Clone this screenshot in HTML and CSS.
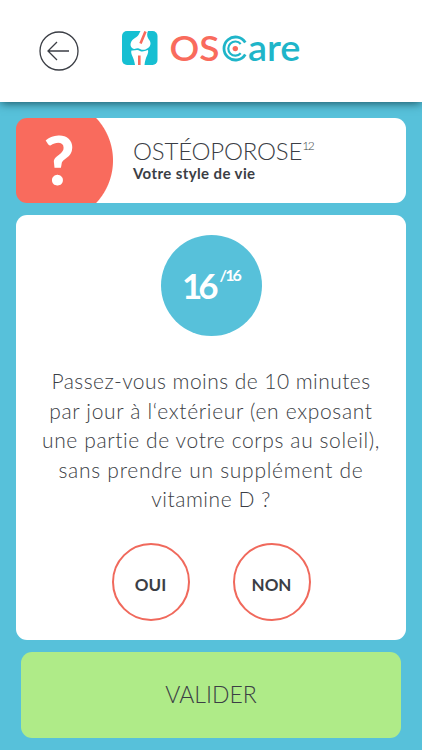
FILE: index.html
```html
<!DOCTYPE html>
<html lang="fr">
<head>
    <meta charset="UTF-8">
    <meta name="viewport" content="width=device-width, initial-scale=1.0">
    <title>OSCare - Ostéoporose</title>
    <link rel="stylesheet" href="styles.css">
</head>
<body>
    <header class="header">
        <button class="back-btn" aria-label="Retour">
            <svg width="40" height="40" viewBox="0 0 40 40">
                <circle cx="20" cy="20" r="19"/>
                <path d="M30 20H9M18 11L9 20L18 29"/>
            </svg>
        </button>
        <svg class="logo" width="182" height="42" viewBox="0 0 182 42">
            <rect x="2" y="2" width="35.500" height="34" rx="5" fill="#16bfd2"/>
            <path d="M20.500 2C19 5 18.500 7 15 9C11 11 9 16 12 19C15 21.500 17 18 20 20C23 21.500 25 21 28 19C31 17 31.500 13 28.500 10C26.500 7 27 4 28 2Z" fill="#fff"/>
            <path d="M11.500 21.500C15 22 17 20 20 22C23 23.500 25 21.500 28 21C29 25 25.500 27 24.500 36H15C14 28 10 25 11.500 21.500Z" fill="#fff"/>
            <path d="M25.500 2.500L20.500 14.500M19.300 26.500V36" stroke="#f96b5d" stroke-width="2.600"/>
            <text class="logo-os" x="49.500" y="31.500" textLength="50" lengthAdjust="spacingAndGlyphs">OS</text>
            <g fill="none" stroke="#1fb5c9">
                <path d="M125.300 13.500A11.500 11.500 0 1 0 125.300 25.500" stroke-width="2.800"/>
                <path d="M120.700 14.900A7.100 7.100 0 1 0 120.700 24.300" stroke-width="2.200"/>
            </g>
            <circle cx="115.300" cy="19.600" r="2.700" fill="#f96b5d"/>
            <text class="logo-are" x="128" y="32" textLength="52.500" lengthAdjust="spacingAndGlyphs">are</text>
        </svg>
    </header>

    <main class="content">
        <section class="title-card">
            <div class="title-icon">?</div>
            <div class="title-text">
                <h1>OSTÉOPOROSE<sup>12</sup></h1>
                <h2>Votre style de vie</h2>
            </div>
        </section>

        <section class="question-card">
            <div class="counter"><span>16</span><sup>/16</sup></div>
            <p class="question">
                <span class="line-1">Passez-vous moins de 10 minutes</span>
                <span class="line-2">par jour à l‘extérieur (en exposant</span>
                <span class="line-3">une partie de votre corps au soleil),</span>
                <span class="line-4">sans prendre un supplément de</span>
                <span class="line-5">vitamine D ?</span>
            </p>
            <div class="answers">
                <button class="answer-btn">OUI</button>
                <button class="answer-btn">NON</button>
            </div>
        </section>

        <button class="submit-btn">VALIDER</button>
    </main>
</body>
</html>
```
FILE: styles.css
```css
* {
    margin: 0;
    padding: 0;
    box-sizing: border-box;
    font-family: Lato, 'Open Sans', sans-serif;
}

body {
    background-color: #57c1da;
    color: #3b3e45;
    height: 750px;
    overflow: hidden;
}

button {
    background: none;
    border: none;
    color: inherit;
    cursor: pointer;
}

.header {
    background-color: #fff;
    height: 102px;
    padding: 29px 0 0 39px;
    display: flex;
    align-items: flex-start;
    box-shadow: 0 2px 9px -1px rgba(0, 40, 50, 0.75);
}

.back-btn {
    width: 40px;
    height: 40px;
    margin-top: 2px;
}

.back-btn svg {
    display: block;
    fill: none;
    stroke: #3b3e45;
    stroke-width: 1.3;
}

.logo {
    margin-left: 41px;
    overflow: visible;
}

.logo-os {
    font-size: 34px;
    font-weight: 600;
    fill: #f96b5d;
}

.logo-are {
    font-size: 36px;
    font-weight: 600;
    fill: #1fb5c9;
}

.content {
    padding: 16px 16px 0;
}

.title-card {
    height: 85px;
    border-radius: 11px;
    background: radial-gradient(circle at 35px 42.5px, #f96b5d 61.5px, #fff 62.5px);
    display: flex;
}

.title-icon {
    width: 86px;
    color: #fff;
    font-size: 67px;
    line-height: 83px;
    font-weight: 900;
    text-align: center;
}

.title-text {
    padding: 18px 0 0 31px;
}

.title-text h1 {
    font-size: 24px;
    line-height: 30px;
    font-weight: 300;
    letter-spacing: -0.2px;
    white-space: nowrap;
}

.title-text sup {
    font-size: 12px;
    line-height: 0;
    letter-spacing: -1.5px;
    vertical-align: 10px;
}

.title-text h2 {
    font-size: 15px;
    line-height: 15px;
    font-weight: 700;
    letter-spacing: 0.4px;
}

.question-card {
    height: 425px;
    margin-top: 12px;
    padding-top: 20px;
    border-radius: 11px;
    background-color: #fff;
    display: flex;
    flex-direction: column;
    align-items: center;
}

.counter {
    width: 101px;
    height: 101px;
    border-radius: 50%;
    background-color: #57c1da;
    color: #fff;
    font-size: 35px;
    font-weight: 700;
    display: flex;
    justify-content: center;
    align-items: center;
    gap: 5px;
    padding-bottom: 1px;
}

.counter span {
    letter-spacing: -4px;
}

.counter sup {
    font-size: 16px;
    letter-spacing: -1.8px;
    margin-bottom: 21px;
}

.question {
    margin-top: 30px;
    font-size: 21px;
    line-height: 29.5px;
    font-weight: 300;
    text-align: center;
    white-space: nowrap;
}

.question span {
    display: block;
}

.line-1 {
    letter-spacing: 0.45px;
}

.line-2 {
    letter-spacing: 0.67px;
}

.line-3 {
    letter-spacing: 0.6px;
}

.line-4 {
    letter-spacing: 0.73px;
}

.line-5 {
    letter-spacing: 0.55px;
}

.answers {
    margin-top: 29px;
    display: flex;
    gap: 43px;
}

.answer-btn {
    width: 78px;
    height: 78px;
    border: 2px solid #f0695c;
    border-radius: 50%;
    font-size: 17px;
    font-weight: 700;
    padding-top: 5px;
}

.submit-btn {
    display: block;
    width: 380px;
    height: 86px;
    margin: 12px auto 0;
    padding-bottom: 2px;
    border-radius: 11px;
    background-color: #afeb88;
    font-size: 23px;
    font-weight: 300;
}
```
